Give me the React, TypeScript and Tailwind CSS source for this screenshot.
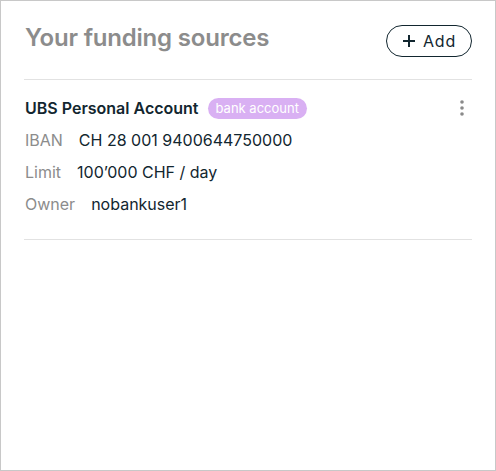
import React from "react";

const rows = [
  { label: "IBAN", value: "CH 28 001 9400644750000" },
  { label: "Limit", value: "100’000 CHF / day" },
  { label: "Owner", value: "nobankuser1" },
];

export default function App() {
  return (
    <div className="w-[496px] h-[471px] border border-[#c8c8c8] bg-white font-['Inter',sans-serif] text-[#12262f]">
      <div className="px-[23px] pt-[20px]">
        <div className="flex items-center justify-between h-[34px]">
          <h1 className="ml-px text-[24px] font-semibold text-[#8c8c8c] tracking-[-0.2px]">Your funding sources</h1>
          <button className="flex items-center gap-[7px] h-[32px] w-[86px] mt-[6px] justify-center rounded-full border border-[#12262f] text-[16px] tracking-[0.8px]">
            <svg width="14" height="14" viewBox="0 0 14 14" fill="none" stroke="#12262f" strokeWidth="2">
              <path d="M7 1v12M1 7h12" />
            </svg>
            Add
          </button>
        </div>
        <div className="mt-[24px] border-t border-[#e2e2e2]" />
        <div className="pl-px pt-[17px] pb-[24px] border-b border-[#e2e2e2]">
          <div className="flex items-center h-[22px]">
            <span className="text-[16px] font-semibold">UBS Personal Account</span>
            <span className="ml-[9px] h-[21px] px-[8px] rounded-full bg-[#d9b0f3] text-white text-[13px] leading-[21px]">bank account</span>
            <svg className="ml-auto mr-[8px]" width="4" height="16" viewBox="0 0 4 16" fill="#8a8a8a">
              <circle cx="2" cy="2" r="1.8" />
              <circle cx="2" cy="8" r="1.8" />
              <circle cx="2" cy="14" r="1.8" />
            </svg>
          </div>
          <div className="flex flex-col gap-[10px] mt-[10px]">
            {rows.map((r) => (
              <div key={r.label} className="flex items-center h-[22px] text-[16px]">
                <span className="text-[#8c8c8c] mr-[16px]">{r.label}</span>
                <span>{r.value}</span>
              </div>
            ))}
          </div>
        </div>
      </div>
    </div>
  );
}
